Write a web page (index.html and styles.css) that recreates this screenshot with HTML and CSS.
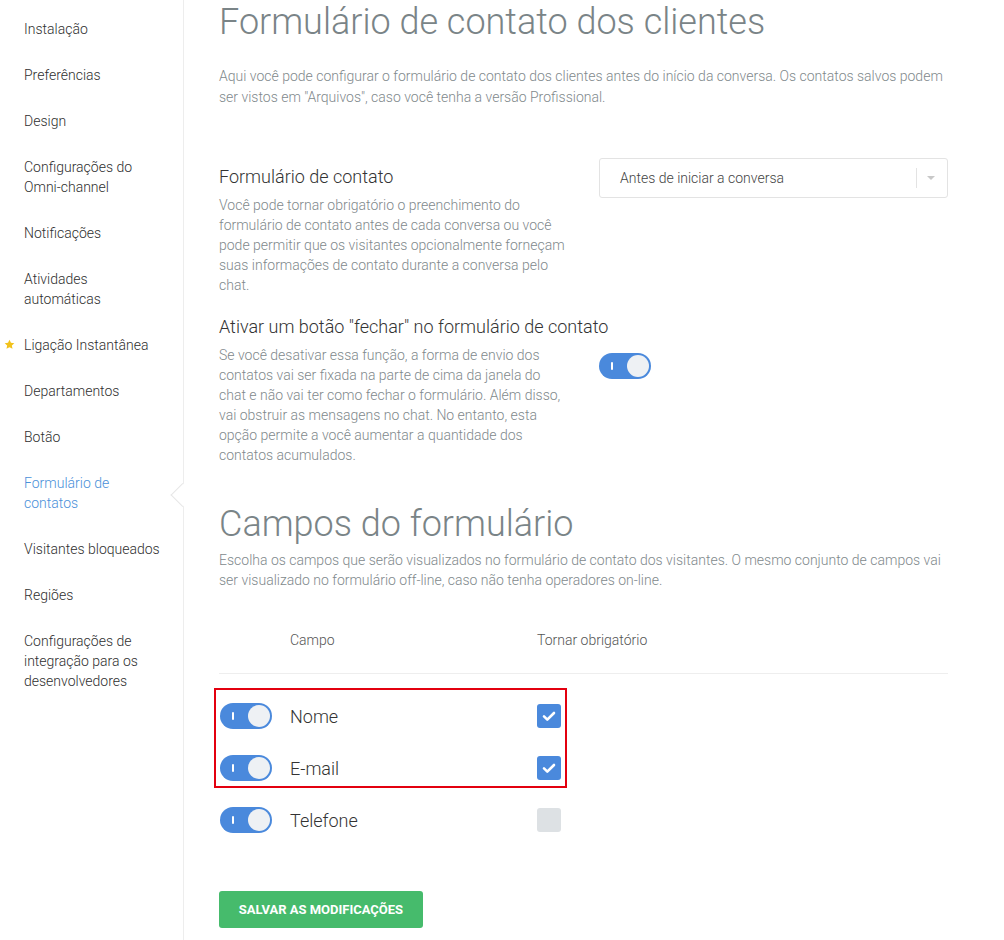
FILE: index.html
```html
<!DOCTYPE html>
<html lang="pt-BR">
<head>
<meta charset="utf-8">
<title>Formulário de contato dos clientes</title>
<link rel="stylesheet" href="styles.css">
</head>
<body>
<div class="layout">
  <nav class="sidebar">
    <a class="nav-item">Instalação</a>
    <a class="nav-item">Preferências</a>
    <a class="nav-item">Design</a>
    <a class="nav-item">Configurações do Omni-channel</a>
    <a class="nav-item">Notificações</a>
    <a class="nav-item">Atividades automáticas</a>
    <a class="nav-item nav-item--star">
      <svg class="star" viewBox="0 0 24 24" width="11" height="11"><path d="M12 1.5l3.2 6.9 7.3.8-5.4 5 1.5 7.3L12 17.8l-6.6 3.7 1.5-7.3-5.4-5 7.3-.8z" fill="#f2c21b"/></svg>
      Ligação Instantânea
    </a>
    <a class="nav-item">Departamentos</a>
    <a class="nav-item">Botão</a>
    <a class="nav-item nav-item--active">Formulário de contatos</a>
    <a class="nav-item">Visitantes bloqueados</a>
    <a class="nav-item">Regiões</a>
    <a class="nav-item">Configurações de integração para os desenvolvedores</a>
  </nav>

  <main class="content">
    <h1 class="page-title">Formulário de contato dos clientes</h1>
    <p class="intro">Aqui você pode configurar o formulário de contato dos clientes antes do início da conversa. Os contatos salvos podem ser vistos em "Arquivos", caso você tenha a versão Profissional.</p>

    <section class="setting setting--first">
      <div class="setting-text">
        <h3 class="setting-label">Formulário de contato</h3>
        <p class="setting-desc">Você pode tornar obrigatório o preenchimento do formulário de contato antes de cada conversa ou você pode permitir que os visitantes opcionalmente forneçam suas informações de contato durante a conversa pelo chat.</p>
      </div>
      <div class="setting-control">
        <div class="select">
          <span class="select-value">Antes de iniciar a conversa</span>
          <span class="select-sep"></span>
          <span class="select-caret"></span>
        </div>
      </div>
    </section>

    <section class="setting">
      <div class="setting-text">
        <h3 class="setting-label">Ativar um botão "fechar" no formulário de contato</h3>
        <p class="setting-desc">Se você desativar essa função, a forma de envio dos contatos vai ser fixada na parte de cima da janela do chat e não vai ter como fechar o formulário. Além disso, vai obstruir as mensagens no chat. No entanto, esta opção permite a você aumentar a quantidade dos contatos acumulados.</p>
      </div>
      <div class="setting-control setting-control--toggle">
        <span class="toggle"><span class="toggle-mark"></span><span class="toggle-knob"></span></span>
      </div>
    </section>

    <h2 class="section-title">Campos do formulário</h2>
    <p class="section-desc">Escolha os campos que serão visualizados no formulário de contato dos visitantes. O mesmo conjunto de campos vai ser visualizado no formulário off-line, caso não tenha operadores on-line.</p>

    <div class="fields">
      <div class="fields-head">
        <span></span>
        <span>Campo</span>
        <span>Tornar obrigatório</span>
      </div>
      <div class="fields-body">
        <div class="highlight"></div>
        <div class="field-row">
          <span class="toggle"><span class="toggle-mark"></span><span class="toggle-knob"></span></span>
          <span class="field-name">Nome</span>
          <span class="checkbox checkbox--on"><svg viewBox="0 0 24 24" width="24" height="24"><path d="M7 12.4l3.3 3.2L17 9" fill="none" stroke="#fff" stroke-width="2.6" stroke-linecap="round" stroke-linejoin="round"/></svg></span>
        </div>
        <div class="field-row">
          <span class="toggle"><span class="toggle-mark"></span><span class="toggle-knob"></span></span>
          <span class="field-name">E-mail</span>
          <span class="checkbox checkbox--on"><svg viewBox="0 0 24 24" width="24" height="24"><path d="M7 12.4l3.3 3.2L17 9" fill="none" stroke="#fff" stroke-width="2.6" stroke-linecap="round" stroke-linejoin="round"/></svg></span>
        </div>
        <div class="field-row">
          <span class="toggle"><span class="toggle-mark"></span><span class="toggle-knob"></span></span>
          <span class="field-name">Telefone</span>
          <span class="checkbox"></span>
        </div>
      </div>
    </div>

    <button class="save-btn" type="button">Salvar as modificações</button>
  </main>
</div>
</body>
</html>
```

FILE: styles.css
```css
* { box-sizing: border-box; }

html, body {
  margin: 0;
  padding: 0;
  background: #fff;
}

body {
  font-family: Roboto, "Liberation Sans", Arial, sans-serif;
  color: #444;
}

.layout {
  display: flex;
  min-height: 940px;
}

/* ---- left navigation ---- */
.sidebar {
  width: 184px;
  flex: 0 0 184px;
  border-right: 1px solid #ededed;
  padding: 19px 20px 0 24px;
  display: flex;
  flex-direction: column;
  gap: 26px;
}

.nav-item {
  position: relative;
  display: block;
  font-size: 14px;
  font-weight: 300;
  line-height: 20px;
  color: #2f2f2f;
  text-decoration: none;
  cursor: pointer;
}

.nav-item--star .star {
  position: absolute;
  left: -20px;
  top: 4px;
}

.nav-item--active {
  color: #4a90d9;
}

/* notch pointing from the content into the menu */
.nav-item--active::after {
  content: "";
  position: absolute;
  right: -28px;
  top: 50%;
  width: 16px;
  height: 16px;
  margin-top: 2px;
  background: #fff;
  border-left: 1px solid #e6e6e6;
  border-bottom: 1px solid #e6e6e6;
  transform: translateY(-50%) rotate(45deg);
}

/* ---- main column ---- */
.content {
  flex: 1;
  padding: 0 56px 0 35px;
}

.page-title,
.section-title {
  margin: 0;
  font-size: 36px;
  line-height: 44px;
  font-weight: 300;
  color: #7a8487;
}

.intro {
  margin: 22px 0 0;
  font-size: 14px;
  font-weight: 300;
  line-height: 21px;
  color: #7f898c;
}

.setting {
  display: flex;
  gap: 30px;
  margin-top: 14px;
}

.setting--first {
  margin-top: 51px;
}

.setting-text {
  width: 350px;
  flex: 0 0 350px;
}

.setting-label {
  margin: 0;
  font-size: 18px;
  line-height: 36px;
  font-weight: 300;
  color: #333;
  white-space: nowrap;
}

.setting-desc {
  margin: 0;
  font-size: 14px;
  font-weight: 300;
  line-height: 20px;
  color: #7f898c;
}

.setting-control {
  flex: 1;
}

.setting-control--toggle {
  padding-top: 44px;
}

.select {
  display: flex;
  align-items: center;
  height: 40px;
  margin-top: -1px;
  border: 1px solid #e3e3e3;
  border-radius: 3px;
  padding: 0 12px 0 20px;
}

.select-value {
  flex: 1;
  font-size: 14px;
  font-weight: 300;
  color: #444;
}

.select-sep {
  width: 1px;
  height: 20px;
  background: #e3e3e3;
  margin-right: 10px;
}

.select-caret {
  width: 0;
  height: 0;
  border-left: 4px solid transparent;
  border-right: 4px solid transparent;
  border-top: 4px solid #c8c8c8;
}

/* ---- switch ---- */
.toggle {
  position: relative;
  display: inline-block;
  width: 52px;
  height: 26px;
  border-radius: 13px;
  background: #4a89dc;
}

.toggle-mark {
  position: absolute;
  left: 12px;
  top: 9px;
  width: 2px;
  height: 8px;
  background: #fff;
  border-radius: 1px;
}

.toggle-knob {
  position: absolute;
  right: 2px;
  top: 2px;
  width: 22px;
  height: 22px;
  border-radius: 50%;
  background: #eef1f4;
}

.section-title {
  margin-top: 37px;
}

.section-desc {
  margin: 4px 0 0;
  font-size: 14px;
  font-weight: 300;
  line-height: 20px;
  color: #7f898c;
}

/* ---- field table ---- */
.fields {
  margin-top: 40px;
}

.fields-head,
.field-row {
  display: grid;
  grid-template-columns: 71px 247px 24px;
  align-items: center;
}

.fields-head {
  font-size: 14px;
  font-weight: 300;
  line-height: 20px;
  color: #555;
  white-space: nowrap;
  padding-bottom: 23px;
  border-bottom: 1px solid #eeeeee;
}

.fields-body {
  position: relative;
  padding-top: 16px;
}

.field-row {
  height: 52px;
}

.field-row .toggle {
  margin-left: 1px;
}

.field-name {
  font-size: 18px;
  font-weight: 300;
  color: #333;
}

.checkbox {
  display: block;
  width: 24px;
  height: 24px;
  border-radius: 3px;
  background: #dde1e4;
}

.checkbox svg { display: block; }

.checkbox--on {
  background: #4a89dc;
}

/* red outline marking the first two fields */
.highlight {
  position: absolute;
  left: -5px;
  top: 14px;
  width: 353px;
  height: 100px;
  border: 2px solid #e3000f;
  pointer-events: none;
}

.save-btn {
  display: block;
  margin-top: 45px;
  width: 204px;
  height: 37px;
  border: 0;
  border-radius: 3px;
  background: #46bb6c;
  color: #fff;
  font-family: Roboto, "Liberation Sans", Arial, sans-serif;
  font-size: 13px;
  font-weight: 700;
  text-transform: uppercase;
  cursor: pointer;
}
```
